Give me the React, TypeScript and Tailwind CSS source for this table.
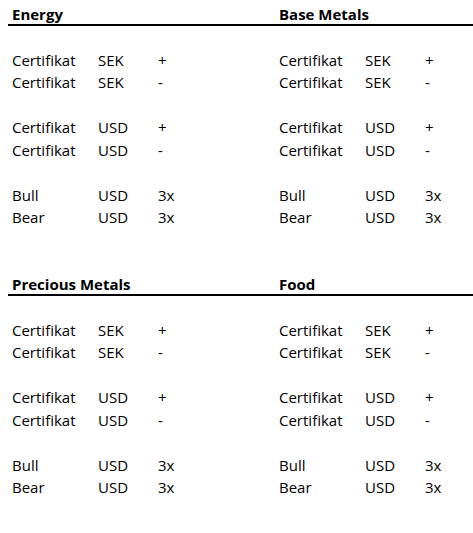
const groups = [
  ["Energy", "Base Metals"],
  ["Precious Metals", "Food"],
];

const rows: (string[] | null)[] = [
  null,
  ["Certifikat", "SEK", "+"],
  ["Certifikat", "SEK", "-"],
  null,
  ["Certifikat", "USD", "+"],
  ["Certifikat", "USD", "-"],
  null,
  ["Bull", "USD", "3x"],
  ["Bear", "USD", "3x"],
  null,
  null,
];

function Block({ cells }: { cells: string[] }) {
  return (
    <div className="flex w-[267px] shrink-0">
      <span className="w-[86px]">{cells[0]}</span>
      <span className="w-[60px]">{cells[1]}</span>
      <span>{cells[2]}</span>
    </div>
  );
}

function Section({ titles }: { titles: string[] }) {
  return (
    <div>
      <div className="ml-2 flex h-[22.5px] border-b-2 border-black pl-1 font-bold leading-[20.5px]">
        <span className="w-[267px] shrink-0">{titles[0]}</span>
        <span>{titles[1]}</span>
      </div>
      {rows.map((r, i) => (
        <div key={i} className="flex h-[22.5px] pl-3 leading-[22.5px]">
          {r && (
            <>
              <Block cells={r} />
              <Block cells={r} />
            </>
          )}
        </div>
      ))}
    </div>
  );
}

export default function App() {
  return (
    <div className="h-[533px] w-[473px] overflow-hidden bg-white pt-[3.75px] font-['Open_Sans',sans-serif] text-[15px] text-black">
      {groups.map((g) => (
        <Section key={g[0]} titles={g} />
      ))}
    </div>
  );
}
